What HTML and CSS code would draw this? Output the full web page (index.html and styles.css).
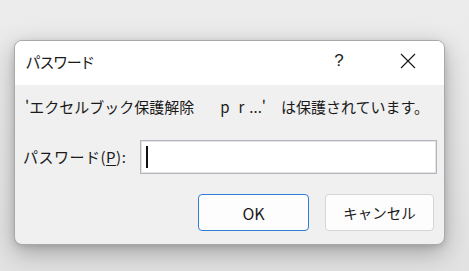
FILE: index.html
```html
<!DOCTYPE html>
<html lang="ja">
<head>
<meta charset="utf-8">
<link rel="stylesheet" href="styles.css">
</head>
<body>
<div class="dialog">
  <div class="titlebar">
    <div class="title">パスワード</div>
    <div class="caption-btn help">?</div>
    <div class="caption-btn close">
      <svg width="16" height="16" viewBox="0 0 16 16"><path d="M1 1 L15 15 M15 1 L1 15" stroke="#1a1a1a" stroke-width="1.2" fill="none"/></svg>
    </div>
  </div>
  <div class="content">
    <div class="message">'エクセルブック保護解除<span class="gap1"></span>p<span class="gap2"></span>r<span class="gap3"></span>...'<span class="gap4"></span>は保護されています。</div>
    <div class="row">
      <label class="label">パスワード(<u>P</u>):</label>
      <div class="input"><span class="caret"></span></div>
    </div>
    <div class="buttons">
      <div class="btn ok">OK</div>
      <div class="btn cancel">キャンセル</div>
    </div>
  </div>
</div>
</body>
</html>
```

FILE: styles.css
```css
html, body {
  margin: 0;
  height: 100%;
}
body {
  background: linear-gradient(#ececec, #e2e2e2);
  padding: 40px 0 0 14px;
  box-sizing: border-box;
  font-family: "Noto Sans CJK JP", "Noto Sans", sans-serif;
  color: #1a1a1a;
}
.dialog {
  width: 431px;
  height: 205px;
  box-sizing: border-box;
  border: 1px solid #a9a9a9;
  border-radius: 8px;
  background: #f0f0f0;
  overflow: hidden;
  box-shadow: 0 8px 24px rgba(0,0,0,0.28), 0 2px 6px rgba(0,0,0,0.12);
  display: flex;
  flex-direction: column;
}
.titlebar {
  height: 44px;
  background: #ffffff;
  display: flex;
  align-items: center;
  flex-shrink: 0;
}
.title {
  flex: 1;
  padding-left: 11px;
  font-size: 15px;
  line-height: 20px;
  margin-top: -2px;
  font-feature-settings: "palt";
}
.caption-btn {
  width: 70px;
  height: 44px;
  display: flex;
  align-items: center;
  justify-content: center;
}
.help {
  font-family: "Liberation Sans", sans-serif;
  font-size: 17px;
  margin-top: -4px;
  color: #222;
}
.close svg {
  margin-top: -4px;
  margin-right: 2px;
}
.content {
  display: flex;
  flex-direction: column;
  padding: 12px 7px 0 8px;
}
.message {
  font-size: 15px;
  line-height: 20px;
  padding-left: 2px;
  white-space: nowrap;
}
.gap1 { display: inline-block; width: 26px; }
.gap2 { display: inline-block; width: 9px; }
.gap3 { display: inline-block; width: 5px; }
.gap4 { display: inline-block; width: 15px; }
.row {
  display: flex;
  align-items: center;
  margin-top: 23px;
}
.label {
  font-size: 15px;
  line-height: 20px;
  width: 117px;
  white-space: nowrap;
  letter-spacing: 0.5px;
}
.label u {
  text-underline-offset: 2px;
}
.input {
  flex: 1;
  height: 34px;
  box-sizing: border-box;
  background: #fff;
  border: 1px solid #b4b4bc;
  box-shadow: inset 0 0 0 1px #e4e4e8;
  display: flex;
  align-items: center;
  padding-left: 5px;
}
.caret {
  width: 2px;
  height: 22px;
  background: #111;
}
.buttons {
  display: flex;
  justify-content: flex-end;
  gap: 16px;
  margin-top: 20px;
  padding-right: 3px;
}
.btn {
  height: 37px;
  box-sizing: border-box;
  border-radius: 4px;
  background: #fdfdfd;
  font-size: 15px;
  display: flex;
  align-items: center;
  justify-content: center;
}
.ok {
  width: 111px;
  border: 1px solid #2f7fd6;
  font-size: 16px;
}
.cancel {
  width: 109px;
  border: 1px solid #d6d6d6;
  font-size: 14.5px;
}
```
